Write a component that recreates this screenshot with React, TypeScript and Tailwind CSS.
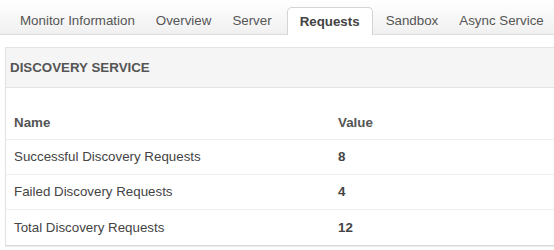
const tabs = ['Monitor Information', 'Overview', 'Server', 'Requests', 'Sandbox', 'Async Service']

const rows = [
  { name: 'Successful Discovery Requests', value: '8' },
  { name: 'Failed Discovery Requests', value: '4' },
  { name: 'Total Discovery Requests', value: '12' },
]

export default function App() {
  return (
    <div className="w-[554px] h-[250px] bg-white overflow-hidden font-['Liberation_Sans',Arial,sans-serif] text-[13.33px]">
      {/* tab strip */}
      <div className="h-[35px] bg-gradient-to-b from-white to-[#f0f0f0] border-b border-[#dcdcdc] flex items-end pl-[11px] gap-[3px] whitespace-nowrap">
        {tabs.map((t) =>
          t === 'Requests' ? (
            <div
              key={t}
              className="shrink-0 h-[28px] -mb-px ml-[3px] mr-[1px] px-[12px] pt-px flex items-center bg-white border border-b-0 border-[#d4d4d4] rounded-t-[5px] font-bold text-[#444]"
            >
              {t}
            </div>
          ) : (
            <div key={t} className="shrink-0 h-[28px] px-[9px] pt-[2px] flex items-center text-[#555]">
              {t}
            </div>
          )
        )}
      </div>

      {/* panel */}
      <div className="mt-[12px] ml-[5px] w-[560px] border border-[#e3e3e3] border-b-[#d8d8d8] shadow-[0_1px_1px_rgba(0,0,0,0.06)]">
        <div className="h-[40px] bg-[#f5f5f5] border-b border-[#e3e3e3] flex items-center pl-[4px] font-bold text-[#555]">
          DISCOVERY SERVICE
        </div>
        <div className="pt-[17px]">
          <div className="h-[35px] pt-px flex items-center border-b border-[#eeeeee] font-bold text-[#555]">
            <div className="w-[332px] pl-[8px]">Name</div>
            <div>Value</div>
          </div>
          {rows.map((r, i) => (
            <div
              key={r.name}
              className={`h-[35px] flex items-center text-[#444] ${i < rows.length - 1 ? 'border-b border-[#eeeeee]' : ''}`}
            >
              <div className="w-[332px] pl-[8px]">{r.name}</div>
              <div className="font-bold">{r.value}</div>
            </div>
          ))}
        </div>
      </div>
    </div>
  )
}
